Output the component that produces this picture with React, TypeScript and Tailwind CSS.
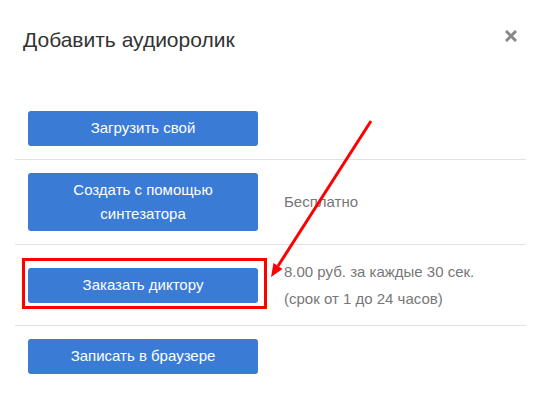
import React from "react";

const btn =
  "w-[230px] rounded-[3px] bg-[#3a7bd5] text-white text-[15px] flex items-center justify-center text-center shrink-0";

export default function App() {
  return (
    <div
      className="relative w-[536px] h-[398px] bg-white overflow-hidden"
      style={{ fontFamily: '"Liberation Sans", Arial, sans-serif' }}
    >
      <div className="h-[98px] pl-[23px] pt-[25px]">
        <h4 className="text-[21px] leading-[30px] text-[#333]">Добавить аудиоролик</h4>
      </div>
      <svg className="absolute left-[504px] top-[29px]" width="14" height="14" viewBox="0 0 14 14">
        <path d="M2 2 L12 12 M12 2 L2 12" stroke="#888" strokeWidth="3" strokeLinecap="butt" />
      </svg>

      <div className="ml-[15px] mr-[10px]">
        <div className="flex items-center py-[13px] pl-[13px] border-b border-[#e2e2e2]">
          <div className={`${btn} h-[35px]`}>Загрузить свой</div>
        </div>
        <div className="flex items-center py-[13px] pl-[13px] border-b border-[#e2e2e2]">
          <div className={`${btn} h-[58px] leading-[24px]`}>
            Создать с помощью
            <br />
            синтезатора
          </div>
          <div className="ml-[26px] text-[15px] text-[#777]">Бесплатно</div>
        </div>
        <div className="flex items-center py-[13px] pl-[13px] border-b border-[#e2e2e2]">
          <div className={`${btn} h-[35px]`}>Заказать диктору</div>
          <div className="ml-[26px] text-[15px] leading-[27px] text-[#777]">
            <div>8.00 руб. за каждые 30 сек.</div>
            <div>(срок от 1 до 24 часов)</div>
          </div>
        </div>
        <div className="flex items-center py-[13px] pl-[13px]">
          <div className={`${btn} h-[35px]`}>Записать в браузере</div>
        </div>
      </div>

      <div className="absolute left-[22px] top-[258px] w-[245px] h-[51px] border-[3px] border-[#ff0000]" />
      <svg className="absolute left-0 top-0 pointer-events-none" width="536" height="398">
        <line x1="371" y1="121" x2="278" y2="266" stroke="#ff0000" strokeWidth="3" />
        <polygon points="271,277 282.5,269 273.5,263" fill="#ff0000" />
      </svg>
    </div>
  );
}
